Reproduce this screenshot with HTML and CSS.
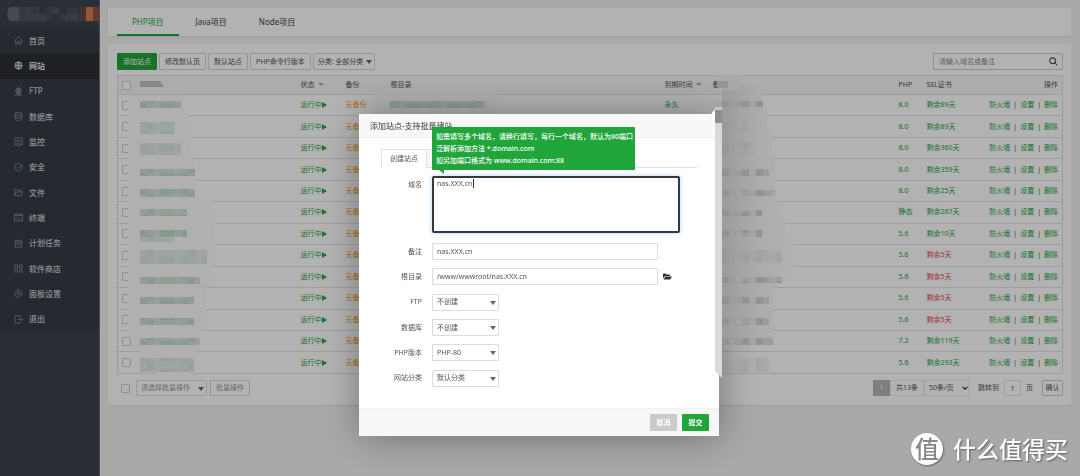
FILE: index.html
```html
<!DOCTYPE html>
<html lang="zh-CN">
<head>
<meta charset="utf-8">
<title>网站</title>
<link rel="stylesheet" href="styles.css">
</head>
<body>
<div class="app">
  <aside class="sidebar">
    <div class="brand">
      <svg width="93" height="14" viewBox="0 0 93 14">
        <path d="M3 0h9v14H3Q0 11 0 7t3-7z" fill="#646a70"/>
        <path d="M12 0h20v14H12z" fill="#4d535a"/><path d="M19 0h7v14h-7zM32 7h7v7h-7zM45 0h7v7h-7zM58 7h14v7H58z" fill="#50565e"/>
        <path d="M26 0h7v7h-7zM39 0h6v14h-6zM52 7h6v7h-6zM60 0h12v7H60z" fill="#474d57"/>
        <path d="M73 0h6v14h-6z" fill="#5c4a45"/><path d="M79 0h7v14h-7z" fill="#dc7c50"/><path d="M86 0h7v14h-7z" fill="#8c5542"/>
      </svg>
    </div>
    <nav class="menu">
      <a href="#"><svg viewBox="0 0 16 16"><path d="M1 8l7-6.500L15 8M3 7v7.500h3.500V10h3v4.500H13V7"/></svg>首页</a>
      <a href="#" class="active"><svg viewBox="0 0 16 16"><circle cx="8" cy="8" r="6.500"/><ellipse cx="8" cy="8" rx="3" ry="6.500"/><path d="M1.500 8h13M8 1.500v13"/></svg>网站</a>
      <a href="#"><svg viewBox="0 0 16 16"><circle cx="8" cy="6.500" r="5"/><ellipse cx="8" cy="6.500" rx="2" ry="5"/><path d="M3 6.500h10M8 1.500v13M1 14.500h14M3 12h10"/></svg>FTP</a>
      <a href="#"><svg viewBox="0 0 16 16"><ellipse cx="8" cy="3.500" rx="6" ry="2.500"/><path d="M2 3.500v9c0 3.300 12 3.300 12 0v-9M2 8c0 3.300 12 3.300 12 0"/></svg>数据库</a>
      <a href="#"><svg viewBox="0 0 16 16"><path d="M1.500 1.500h13v13h-13zM4 9l2.500-4L9 9l3-4M4 12h8"/></svg>监控</a>
      <a href="#"><svg viewBox="0 0 16 16"><path d="M8 1l6 2v5c0 4-3 6-6 7-3-1-6-3-6-7V3zM5 8l2 2 4-4"/></svg>安全</a>
      <a href="#"><svg viewBox="0 0 16 16"><path d="M1.500 13.500v-11h4l2 2h6V7M1.500 13.500L4 7h11l-2 6.500z"/></svg>文件</a>
      <a href="#"><svg viewBox="0 0 16 16"><path d="M1 2h14v12H1zM1 4.500h14M4 7l2 2-2 2M8 11h4"/></svg>终端</a>
      <a href="#"><svg viewBox="0 0 16 16"><path d="M2 3h12v11.500H2zM2 6.500h12M5 1v3M11 1v3M5 10h6"/></svg>计划任务</a>
      <a href="#"><svg viewBox="0 0 16 16"><path d="M1.500 1.500h5v5h-5zM9.500 1.500h5v5h-5zM1.500 9.500h5v5h-5zM9.500 9.500h5v5h-5z"/></svg>软件商店</a>
      <a href="#"><svg viewBox="0 0 16 16"><path d="M6.500 1h3l.5 2 2-.5 2 2.500-1 2 1.500 1-1 3-2 .3-.5 2-3 1.700-2-1-2 .5-2-2.500 1-2-1.500-2 1-3 2-.2z"/><circle cx="8" cy="8" r="2.500"/></svg>面板设置</a>
      <a href="#"><svg viewBox="0 0 16 16"><path d="M11 5V1.500H2v13h9V11M6 8h9M12.500 5.500L15 8l-2.500 2.500"/></svg>退出</a>
    </nav>
  </aside>

  <main class="main">
    <nav class="panel tabs">
      <a href="#" class="active">PHP项目</a>
      <a href="#">Java项目</a>
      <a href="#">Node项目</a>
    </nav>

    <section class="panel content">
      <div class="toolbar">
        <button class="btn primary">添加站点</button>
        <button class="btn">修改默认页</button>
        <button class="btn">默认站点</button>
        <button class="btn">PHP命令行版本</button>
        <div class="select filter"><select aria-label="分类"><option>分类: 全部分类</option></select></div>
        <div class="search">
          <input type="text" placeholder="请输入域名或备注" aria-label="搜索">
          <button aria-label="搜索"><svg viewBox="0 0 16 16"><circle cx="6.500" cy="6.500" r="5"/><path d="M10.500 10.500L15 15"/></svg></button>
        </div>
      </div>

      <div class="table-wrap">
        <table>
          <colgroup><col class="c-check"><col class="c-name"><col class="c-state"><col class="c-backup"><col><col class="c-expire"><col class="c-note"><col class="c-php"><col class="c-ssl"><col class="c-ops"></colgroup>
          <thead>
            <tr><th><input type="checkbox" aria-label="全选"></th><th></th><th>状态<i class="sort"></i></th><th>备份</th><th>根目录</th><th>到期时间<i class="sort"></i></th><th>备注</th><th>PHP</th><th>SSL证书</th><th class="ops">操作</th></tr>
          </thead>
          <tbody>
            <tr><td><input type="checkbox" aria-label="选择"></td><td></td><td><a href="#">运行中<i class="play"></i></a></td><td><a href="#" class="warn">无备份</a></td><td></td><td><a href="#">永久</a></td><td></td><td><a href="#">8.0</a></td><td><a href="#">剩余89天</a></td><td class="ops"><a href="#">防火墙</a><b>|</b><a href="#">设置</a><b>|</b><a href="#">删除</a></td></tr>
            <tr><td><input type="checkbox" aria-label="选择"></td><td></td><td><a href="#">运行中<i class="play"></i></a></td><td><a href="#" class="warn">无备份</a></td><td></td><td></td><td></td><td><a href="#">8.0</a></td><td><a href="#">剩余89天</a></td><td class="ops"><a href="#">防火墙</a><b>|</b><a href="#">设置</a><b>|</b><a href="#">删除</a></td></tr>
            <tr><td><input type="checkbox" aria-label="选择"></td><td></td><td><a href="#">运行中<i class="play"></i></a></td><td><a href="#" class="warn">无备份</a></td><td></td><td></td><td></td><td><a href="#">8.0</a></td><td><a href="#">剩余360天</a></td><td class="ops"><a href="#">防火墙</a><b>|</b><a href="#">设置</a><b>|</b><a href="#">删除</a></td></tr>
            <tr><td><input type="checkbox" aria-label="选择"></td><td></td><td><a href="#">运行中<i class="play"></i></a></td><td><a href="#" class="warn">无备份</a></td><td></td><td></td><td></td><td><a href="#">8.0</a></td><td><a href="#">剩余359天</a></td><td class="ops"><a href="#">防火墙</a><b>|</b><a href="#">设置</a><b>|</b><a href="#">删除</a></td></tr>
            <tr><td><input type="checkbox" aria-label="选择"></td><td></td><td><a href="#">运行中<i class="play"></i></a></td><td><a href="#" class="warn">无备份</a></td><td></td><td></td><td></td><td><a href="#">8.0</a></td><td><a href="#">剩余25天</a></td><td class="ops"><a href="#">防火墙</a><b>|</b><a href="#">设置</a><b>|</b><a href="#">删除</a></td></tr>
            <tr><td><input type="checkbox" aria-label="选择"></td><td></td><td><a href="#">运行中<i class="play"></i></a></td><td><a href="#" class="warn">无备份</a></td><td></td><td></td><td></td><td><a href="#">静态</a></td><td><a href="#">剩余287天</a></td><td class="ops"><a href="#">防火墙</a><b>|</b><a href="#">设置</a><b>|</b><a href="#">删除</a></td></tr>
            <tr><td><input type="checkbox" aria-label="选择"></td><td></td><td><a href="#">运行中<i class="play"></i></a></td><td><a href="#" class="warn">无备份</a></td><td></td><td></td><td></td><td><a href="#">5.6</a></td><td><a href="#">剩余10天</a></td><td class="ops"><a href="#">防火墙</a><b>|</b><a href="#">设置</a><b>|</b><a href="#">删除</a></td></tr>
            <tr><td><input type="checkbox" aria-label="选择"></td><td></td><td><a href="#">运行中<i class="play"></i></a></td><td><a href="#" class="warn">无备份</a></td><td></td><td></td><td></td><td><a href="#">5.6</a></td><td><a href="#" class="danger">剩余5天</a></td><td class="ops"><a href="#">防火墙</a><b>|</b><a href="#">设置</a><b>|</b><a href="#">删除</a></td></tr>
            <tr><td><input type="checkbox" aria-label="选择"></td><td></td><td><a href="#">运行中<i class="play"></i></a></td><td><a href="#" class="warn">无备份</a></td><td></td><td></td><td></td><td><a href="#">5.6</a></td><td><a href="#" class="danger">剩余5天</a></td><td class="ops"><a href="#">防火墙</a><b>|</b><a href="#">设置</a><b>|</b><a href="#">删除</a></td></tr>
            <tr><td><input type="checkbox" aria-label="选择"></td><td></td><td><a href="#">运行中<i class="play"></i></a></td><td><a href="#" class="warn">无备份</a></td><td></td><td></td><td></td><td><a href="#">5.6</a></td><td><a href="#" class="danger">剩余5天</a></td><td class="ops"><a href="#">防火墙</a><b>|</b><a href="#">设置</a><b>|</b><a href="#">删除</a></td></tr>
            <tr><td><input type="checkbox" aria-label="选择"></td><td></td><td><a href="#">运行中<i class="play"></i></a></td><td><a href="#" class="warn">无备份</a></td><td></td><td></td><td></td><td><a href="#">5.6</a></td><td><a href="#" class="danger">剩余5天</a></td><td class="ops"><a href="#">防火墙</a><b>|</b><a href="#">设置</a><b>|</b><a href="#">删除</a></td></tr>
            <tr><td><input type="checkbox" aria-label="选择"></td><td></td><td><a href="#">运行中<i class="play"></i></a></td><td><a href="#" class="warn">无备份</a></td><td></td><td></td><td></td><td><a href="#">7.2</a></td><td><a href="#">剩余119天</a></td><td class="ops"><a href="#">防火墙</a><b>|</b><a href="#">设置</a><b>|</b><a href="#">删除</a></td></tr>
            <tr><td><input type="checkbox" aria-label="选择"></td><td></td><td><a href="#">运行中<i class="play"></i></a></td><td><a href="#" class="warn">无备份</a></td><td></td><td></td><td></td><td><a href="#">5.6</a></td><td><a href="#">剩余293天</a></td><td class="ops"><a href="#">防火墙</a><b>|</b><a href="#">设置</a><b>|</b><a href="#">删除</a></td></tr>
          </tbody>
        </table>
        <svg class="redact-names" width="380" height="320" viewBox="0 0 380 320">
          <defs>
            <pattern id="g" x="23" width="41" height="14" patternUnits="userSpaceOnUse">
              <path fill="#cfe2d5" d="M0 0h41v14H0z"/><path fill="#c6dccd" d="M0 0h7v7H0zM20 0h14v7H20zM7 7h7v7H7z"/><path fill="#dbe6de" d="M14 0h6v14h-6zM34 7h7v7h-7z"/>
            </pattern>
            <pattern id="l" x="23" width="41" height="14" patternUnits="userSpaceOnUse">
              <path fill="#e3ebe5" d="M0 0h41v14H0z"/><path fill="#dae6dd" d="M0 0h7v7H0zM20 0h14v7H20zM7 7h7v7H7z"/><path fill="#e9eeea" d="M14 0h6v14h-6zM34 7h7v7h-7z"/>
            </pattern>
          </defs>
          <path fill="#fdfdfd" d="M12 20h55v20h4v22h3v22h4v42h17v22h3v22h1v21h-4v21h-6v23L76 297Q60 312 40 300L17 270 11 250V26z"/>
          <path fill="#f7f7f7" d="M20 4h28l8 15H20z"/><path fill="#c2c2c2" d="M23 6h20l4 6H23z"/>
          <path fill="url(#g)" d="M23 26h41v7H23zM23 94h55v7H23zM23 114h55v8H23zM23 134h47v7H23zM23 155h47v7H23zM23 202h60v7H23zM23 222h54v7H23zM23 243h54v7H23zM23 263h60v7H23z"/>
          <path fill="url(#l)" d="M23 47h35v12H23zM23 68h41v12H23zM23 175h67v14H23zM23 162h34v5H23zM23 283h54v14H23z"/>
          <path fill="#fafafa" d="M262 18h124l8 12-8 10H262l-8-10z"/><path fill="url(#g)" d="M273 26h95v7h-95z"/>
        </svg>
      </div>

      <div class="list-foot">
        <input type="checkbox" aria-label="全选">
        <div class="select batch"><select aria-label="批量操作"><option>请选择批量操作</option></select></div>
        <button class="btn muted">批量操作</button>
        <div class="pager">
          <span class="cur">1</span><span class="total">共13条</span>
          <div class="select size"><select aria-label="每页条数"><option>50条/页</option></select><svg viewBox="0 0 10 6"><path d="M1 1l4 4 4-4"/></svg></div>
          <label for="jump">跳转到</label><input id="jump" type="text" value="1"><span class="unit">页</span>
          <button class="btn go">确认</button>
        </div>
      </div>
    </section>
  </main>
</div>

<div class="mask">
  <div class="dialog" role="dialog" aria-labelledby="dlg-title">
    <header id="dlg-title">添加站点-支持批量建站</header>
    <div class="dialog-body">
      <div class="dialog-tabs"><button class="on">创建站点</button><button aria-label="批量创建"></button></div>
      <form>
        <div class="row top"><label for="domain">域名</label>
          <div class="domain-box">
            <textarea id="domain">nas.XXX.cn</textarea>
            <i class="caret"></i>
            <div class="tip">如需填写多个域名，请换行填写，每行一个域名，默认为80端口<br>泛解析添加方法 *.domain.com<br>如另加端口格式为 www.domain.com:88</div>
          </div>
        </div>
        <div class="fields">
          <div class="row"><label for="note">备注</label><input id="note" type="text" value="nas.XXX.cn"></div>
          <div class="row"><label for="root">根目录</label><input id="root" type="text" value="/www/wwwroot/nas.XXX.cn"><svg class="folder" viewBox="0 0 18 14"><path d="M0 11V2q0-1 1-1h4l2 2h6q1 0 1 1v2H5q-1 0-2 1z"/><path d="M1 13l3-5q.5-1 1.500-1H18l-3 5q-.5 1-1.500 1z"/></svg></div>
          <div class="row"><label for="ftp">FTP</label><div class="select"><select id="ftp"><option>不创建</option></select></div></div>
          <div class="row"><label for="db">数据库</label><div class="select"><select id="db"><option>不创建</option></select></div></div>
          <div class="row"><label for="php">PHP版本</label><div class="select"><select id="php"><option>PHP-80</option></select></div></div>
          <div class="row"><label for="cat">网站分类</label><div class="select"><select id="cat"><option>默认分类</option></select></div></div>
        </div>
      </form>
    </div>
    <footer><button class="cancel">取消</button><button class="submit">提交</button></footer>
    <svg class="redact-notes" width="90" height="310" viewBox="0 0 90 310">
      <defs>
        <linearGradient id="fade"><stop offset="0" stop-color="#9b9b9b"/><stop offset=".5" stop-color="#acacac"/><stop offset="1" stop-color="#b1b1b1"/></linearGradient>
        <pattern id="n" x="7" width="34" height="14" patternUnits="userSpaceOnUse">
          <path fill="#9c9c9c" d="M0 0h34v14H0z"/><path fill="#929292" d="M0 0h7v14H0zM20 0h7v7h-7z"/><path fill="#a3a3a3" d="M27 0h7v14h-7zM14 7h6v7h-6z"/>
        </pattern>
      </defs>
      <path fill="url(#fade)" d="M7 12h40v24h5v22h5v23h3v42h3v21h7v21h8v43H59v43h0v22H7z"/>
      <path fill="#d8d9d9" d="M0 48h7v258l-7-7z"/><path fill="#c4c4c4" d="M0 30h7v18H0z"/>
      <path fill="#fff" d="M0 37q-7 6 0 13z"/><path fill="#8f8f8f" d="M0 38h7v13H0z"/>
      <path fill="#a9a9a9" d="M2 3h24v15H2z"/><path fill="#949494" d="M2 9h11v7H2z"/>
      <path fill="url(#n)" d="M0 29h48v6H0zM7 97h47v7H7zM7 118h53v6H7zM7 138h40v6H7zM7 158h40v7H7zM7 205h60v6H7zM7 225h47v7H7zM7 246h47v7H7zM7 266h51v7H7z"/>
      <path fill="url(#n)" opacity=".4" d="M7 50h26v8H7zM7 70h33v13H7zM7 178h60v13H7zM7 286h47v14H7z"/>
    </svg>
  </div>
</div>

<div class="watermark"><span class="seal">值</span><span>什么值得买</span></div>
</body>
</html>
```
FILE: styles.css
```css
* { box-sizing: border-box; }
body {
  margin: 0;
  min-height: 100vh;
  background: #f2f2f2;
  color: #555;
  font: 7px/12px "Noto Sans", "Noto Sans CJK SC", sans-serif;
  overflow: hidden;
}
a { color: #20a53a; text-decoration: none; }
button, input, select, textarea { font: inherit; color: inherit; margin: 0; padding: 0; }
i { font-style: normal; }

.app { display: flex; min-height: 100vh; }

.sidebar { flex: none; width: 100px; background: #3d434f; border-right: 1px solid #6b7079; }
.brand { height: 28px; padding: 7px 0 0 7px; overflow: hidden; }
.brand svg { display: block; }
.menu { display: grid; grid-auto-rows: 1fr; height: 304px; background: #363d46; }
.menu a { display: flex; align-items: center; gap: 6px; padding-left: 14px; color: #c9cbce; font-size: 8px; font-weight: 500; }
.menu svg { width: 9px; height: 9px; fill: none; stroke: #858a90; stroke-width: 1.500; }
.menu .active { background: #2b2e33; color: #fff; }
.menu .active svg { stroke: #e0e0e0; }

.main { flex: 1; min-width: 0; padding: 8px 9px 0 8px; }
.panel { background: #fff; box-shadow: 0 1px 1px #e4e4e4; }
.tabs { display: flex; gap: 2px; height: 28px; padding-left: 9px; margin-bottom: 8px; }
.tabs a { padding: 0 15px; color: #444; font-size: 8px; line-height: 28px; }
.tabs .active { color: #20a53a; box-shadow: inset 0 -2px #20a53a; }
.content { padding: 9px 8px 9px 9px; }

.toolbar { display: flex; gap: 2px; height: 17px; margin-bottom: 5px; }
.btn { padding: 0 5px; background: #fff; border: 1px solid #d6d6d6; border-radius: 1px; line-height: 14px; white-space: nowrap; }
.btn.primary { background: #20a53a; border-color: #20a53a; color: #fff; }
.btn.muted { color: #999; }
.select { position: relative; display: flex; width: 67px; height: 17px; }
.select select { flex: 1; min-width: 0; appearance: none; padding-left: 4px; background: #fff; border: 1px solid #dcdcdc; border-radius: 1px; }
.select::after { content: ""; position: absolute; right: 3px; top: 7px; border: 3px solid transparent; border-top: 4px solid #666; border-bottom: 0; pointer-events: none; }
.select.filter { width: 62px; }
.select.filter select { border-color: #d6d6d6; }
.search { display: flex; margin-left: auto; width: 130px; border: 1px solid #d0d0d0; }
.search input { flex: 1; min-width: 0; border: 0; padding-left: 5px; background: none; }
.search input::placeholder { color: #8c8c8c; opacity: 1; }
.search button { width: 18px; border: 0; background: none; display: grid; place-items: center; }
.search svg { width: 9px; height: 9px; fill: none; stroke: #555; stroke-width: 2; }

input[type="checkbox"] { appearance: none; display: block; width: 9px; height: 9px; border: 1px solid #cfcfcf; border-radius: 1px; background: #fff; }
.table-wrap { position: relative; margin-bottom: 6px; }
table { width: 100%; height: 299px; border-collapse: collapse; table-layout: fixed; border: 1px solid #dedede; }
th, td { padding: 0 0 0 5px; text-align: left; font-weight: 400; border-bottom: 1px solid #e2e2e2; white-space: nowrap; }
th { height: 19px; background: #f6f6f6; }
th input, td input { margin-left: -1px; }
.c-check { width: 18px; }
.c-name { width: 160px; }
.c-state, .c-backup { width: 45px; }
.c-expire { width: 48px; }
.c-note { width: 186px; }
.c-php { width: 28px; }
.c-ssl { width: 59px; }
.c-ops { width: 82px; }
th.ops, td.ops { text-align: right; padding-right: 4px; }
.ops b { font-weight: 400; margin: 0 3px; color: #555; }
.warn { color: #f0a030; }
.danger { color: #e8423f; }
.sort, .play { display: inline-block; border: 3px solid transparent; }
.sort { margin-left: 3px; border-top-color: #aaa; border-bottom: 0; vertical-align: 1px; }
.play { border-left: 5px solid #20a53a; border-right: 0; vertical-align: -1px; }
.redact-names { position: absolute; left: 0; top: 0; pointer-events: none; }

.list-foot { display: flex; align-items: center; gap: 3px; height: 16px; padding-left: 4px; }
.list-foot .btn, .list-foot .select { height: 16px; }
.select.batch { width: 71px; margin-left: 3px; color: #999; }
.pager { display: flex; align-items: center; margin-left: auto; line-height: 14px; text-align: center; }
.pager .cur { width: 17px; height: 16px; line-height: 16px; background: #b5b5b5; color: #fff; }
.pager .total { width: 34px; height: 16px; border: 1px solid #ececec; }
.select.size { width: 45px; margin-right: 9px; }
.select.size::after { content: none; }
.select.size select { border-color: #ececec; }
.size svg { position: absolute; right: 1px; top: 6px; width: 6px; height: 4px; fill: none; stroke: #333; stroke-width: 2; }
.pager input { width: 17px; height: 16px; margin: 0 5px; border: 1px solid #e4e4e4; text-align: center; background: #fff; }
.pager .btn { width: 21px; margin-left: 9px; padding: 0; border-color: #ccc; }

.mask { position: fixed; inset: 0; display: flex; justify-content: center; align-items: flex-start; padding: 114px 2px 0 0; background: rgba(0, 0, 0, .3); }
.dialog { position: relative; width: 360px; background: #fff; box-shadow: 1px 1px 36px rgba(0, 0, 0, .35); }
.dialog header { height: 24px; padding-left: 11px; background: #f8f8f8; border-bottom: 1px solid #eee; font-size: 8px; line-height: 24px; color: #333; }
.dialog-body { padding: 11px 22px 17px; }
.dialog-tabs { display: flex; height: 19px; border-bottom: 1px solid #dfdfe8; margin-bottom: 8px; }
.dialog-tabs button { width: 46px; height: 19px; border: 1px solid #dfdfe8; border-left: 0; background: #f7f7f9; }
.dialog-tabs .on { background: #fff; border-left: 1px solid #dfdfe8; border-bottom-color: #fff; }
.row { display: flex; align-items: center; }
.row label { width: 41px; margin-right: 10px; text-align: right; white-space: nowrap; }
.row.top { align-items: flex-start; margin-bottom: 6px; }
.row.top label { padding-top: 3px; }
.domain-box { position: relative; flex: none; width: 248px; }
.domain-box textarea { display: block; width: 100%; height: 57px; padding: 0 3px; border: 2px solid #333840; border-radius: 2px; box-shadow: 0 0 4px rgba(100, 170, 230, .5); resize: none; outline: 0; background: #fff; }
.caret { position: absolute; left: 41px; top: 3px; width: 1px; height: 9px; background: #333; }
.tip { position: absolute; left: 0; bottom: 63px; padding: 4px 2px 3px 4px; background: #20a53a; border-radius: 1px; color: #fff; font-weight: 500; white-space: nowrap; }
.tip::after { content: ""; position: absolute; left: 7px; top: 100%; border-top: 4px solid #20a53a; border-left: 5px solid transparent; }
.fields { display: grid; grid-auto-rows: 1fr; min-height: 152px; }
.fields input { width: 226px; height: 17px; padding-left: 4px; border: 1px solid #ddd; background: #fff; }
.folder { width: 9px; height: 7px; margin-left: 5px; fill: #333; }
.dialog footer { display: flex; justify-content: flex-end; gap: 5px; padding: 5px 10px; background: #f5f8f7; border-top: 1px solid #eef1f0; }
.dialog footer button { width: 27px; height: 17px; border: 0; border-radius: 1px; color: #fff; font-weight: 700; }
.dialog .cancel { background: #cbcbcb; }
.dialog .submit { background: #20a53a; }
.redact-notes { position: absolute; left: 356px; top: -42px; overflow: visible; pointer-events: none; }

.watermark { position: fixed; right: 12px; bottom: 10px; display: flex; align-items: center; gap: 10px; color: #fff; font-size: 23px; line-height: 34px; font-weight: 500; text-shadow: 1px 1px 2px rgba(0, 0, 0, .45); }
.seal { width: 32px; height: 32px; border-radius: 50%; background: #fff; color: #888; font-size: 24px; line-height: 32px; text-align: center; text-shadow: none; box-shadow: 1px 1px 2px rgba(0, 0, 0, .4); }
```
